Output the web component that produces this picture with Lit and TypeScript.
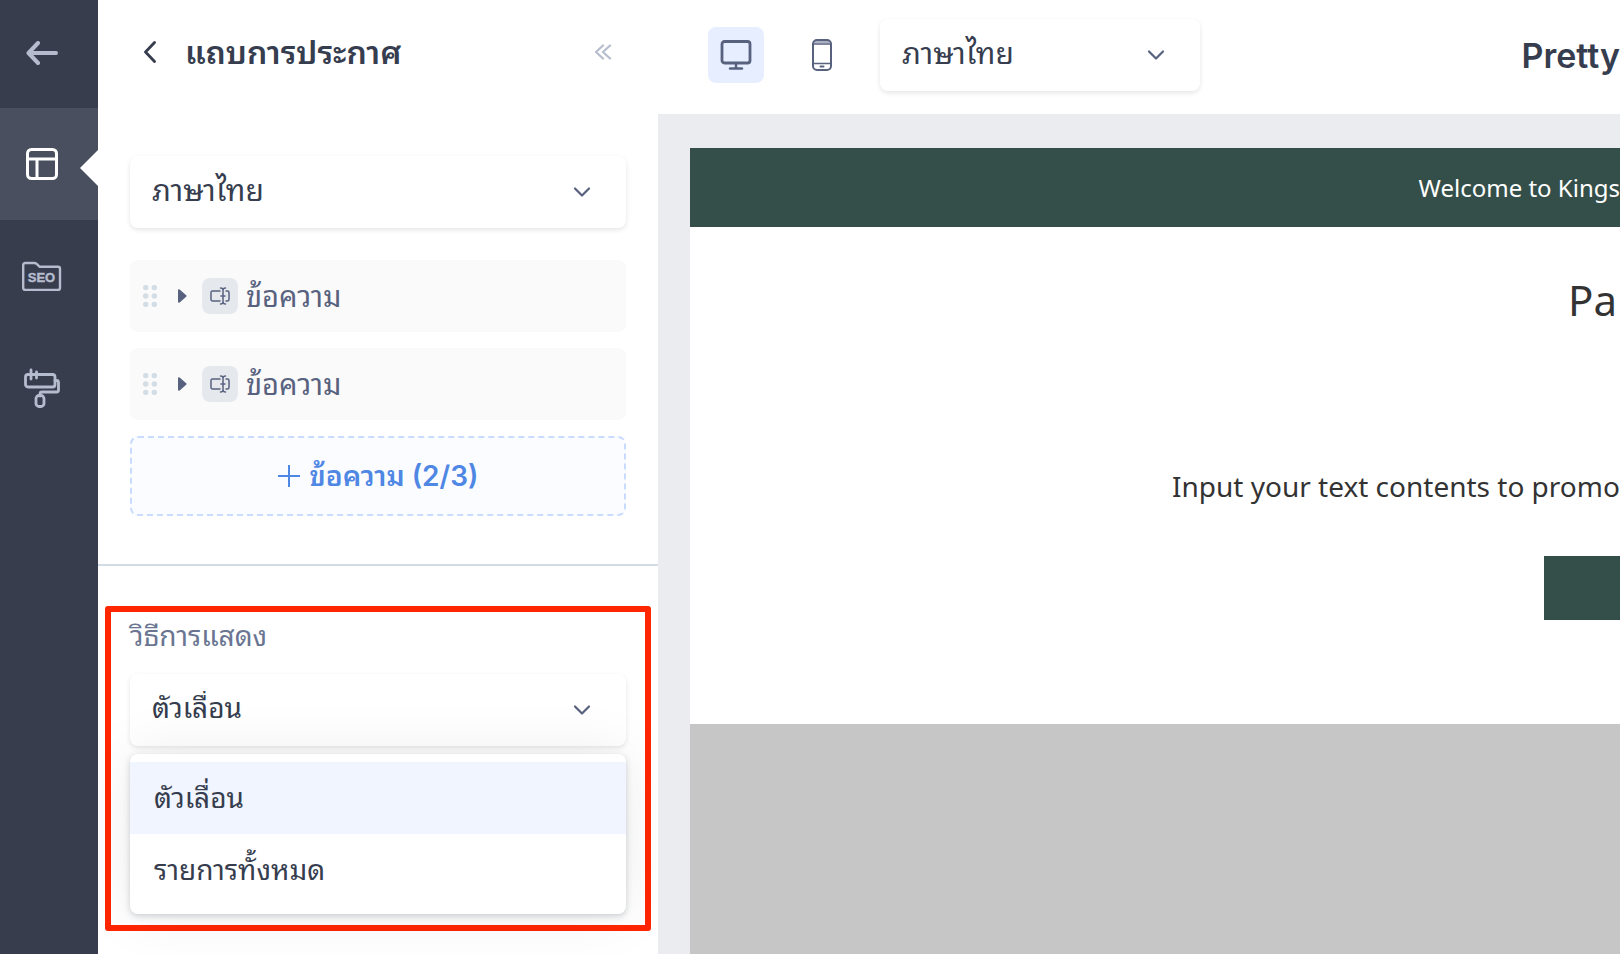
import { LitElement, html, css, svg } from "lit";
import { customElement, property, state } from "lit/decorators.js";

const chevron = html`<svg class="chevron" viewBox="0 0 18 12" width="18" height="12" aria-hidden="true">
  <path d="M2 2.500l7 7 7-7" fill="none" stroke="#58627f" stroke-width="2.200" stroke-linecap="round" stroke-linejoin="round" />
</svg>`;

const sharedSelect = css`
  * { box-sizing: border-box; }
  .field { display: grid; align-items: center; }
  .field > * { grid-area: 1 / 1; }
  .field select {
    appearance: none;
    width: 100%;
    height: 72px;
    margin: 0;
    padding: 0 60px 4px 22px;
    border: 0;
    border-radius: 8px;
    background: #fff;
    box-shadow: 0 2px 5px rgba(0, 0, 0, 0.1);
    color: #363d4e;
    font: inherit;
    font-size: 28px;
    outline: none;
  }
  .field .language { font-size: 30px; }
  .chevron { justify-self: end; margin-right: 35px; pointer-events: none; }
`;

@customElement("nav-rail")
class NavRail extends LitElement {
  static styles = css`
    :host { display: block; background: #373d4d; }
    nav { display: flex; flex-direction: column; }
    button {
      display: flex; align-items: center; justify-content: center;
      position: relative; height: 112px; width: 100%; margin: 0; padding: 0 14px 0 0; border: 0;
      background: none; color: #b5bccd;
    }
    .back { height: 108px; padding-bottom: 2px; }
    .active { background: #494f5f; color: #fff; }
    .active::after {
      content: ""; position: absolute; right: 0; top: 42px;
      border: 18px solid transparent; border-right-color: #fff; border-left: 0;
    }
    .label { font: 700 13px "Liberation Sans", Arial, sans-serif; }
  `;
  render() {
    return html`<nav aria-label="Main">
      <button class="back" aria-label="Back">
        <svg width="32" height="24" viewBox="0 0 32 24" fill="none" stroke="currentColor" stroke-width="4" stroke-linecap="round" stroke-linejoin="round"><path d="M12 2L2.500 12 12 22M3 12h27" /></svg>
      </button>
      <button class="active" aria-label="Layout">
        <svg width="32" height="32" viewBox="0 0 32 32" fill="none" stroke="currentColor" stroke-width="3"><rect x="1.500" y="1.500" width="29" height="29" rx="4" /><path d="M2 11h28M11 11v19" /></svg>
      </button>
      <button aria-label="SEO">
        <svg width="40" height="30" viewBox="0 0 40 30" fill="none" stroke="currentColor" stroke-width="2.400"><path d="M1.200 4a2 2 0 012-2h9q1.500 0 2.500 1l3 2.800h18.300a2 2 0 012 2v19.200a2 2 0 01-2 2h-32.800a2 2 0 01-2-2z" /><text class="label" x="19.500" y="21" text-anchor="middle" fill="currentColor" stroke="currentColor" stroke-width="0.400">SEO</text></svg>
      </button>
      <button aria-label="Theme">
        <svg width="36" height="40" viewBox="0 0 36 40" fill="none" stroke="currentColor" stroke-width="2.800" stroke-linecap="round" stroke-linejoin="round"><rect x="1.500" y="6.500" width="29.500" height="12.500" rx="2.500" /><path d="M7 2v9M12.500 4v6M31 12.500h1.500a2 2 0 012 2v7.500a2 2 0 01-2 2H18a2 2 0 00-2 2v2" /><rect x="12" y="27.500" width="8" height="11" rx="3" /></svg>
      </button>
    </nav>`;
  }
}

@customElement("block-row")
class BlockRow extends LitElement {
  @property() label = "";
  static styles = css`
    :host { display: block; }
    .row { display: flex; align-items: center; height: 72px; padding-left: 13px; border-radius: 8px; background: #fafafa; color: #58627f; font-size: 29px; }
    button { display: flex; margin: 0; padding: 0; border: 0; background: none; color: inherit; }
    .caret { margin: 0 15px 0 20px; }
    .tile { display: flex; align-items: center; justify-content: center; width: 36px; height: 36px; margin-right: 8px; border-radius: 8px; background: #e5e9ee; }
    .text { padding-bottom: 5px; }
  `;
  render() {
    return html`<div class="row">
      <button aria-label="Move">
        <svg width="14" height="22" viewBox="0 0 14 22" fill="#d3dde6">
          ${[2.6, 11, 19.4].map((y) => svg`<circle cx="2.700" cy=${y} r="2.700" /><circle cx="11.300" cy=${y} r="2.700" />`)}
        </svg>
      </button>
      <button class="caret" aria-label="Expand">
        <svg width="10" height="14" viewBox="0 0 10 14"><path d="M2 1.200v11.600L8.500 7z" fill="#58627f" stroke="#58627f" stroke-width="2" stroke-linejoin="round" /></svg>
      </button>
      <span class="tile">
        <svg width="20" height="18" viewBox="0 0 20 18" fill="none" stroke="#58627f" stroke-width="1.500" stroke-linecap="round" stroke-linejoin="round"><path d="M10 4H2.500A1.500 1.500 0 001 5.500v7A1.500 1.500 0 002.500 14H10M16 4h1.500A1.500 1.500 0 0119 5.500v7a1.500 1.500 0 01-1.500 1.500H16M10.500 1q2.500 0 2.500 2 0-2 2.500-2M10.500 17q2.500 0 2.500-2 0 2 2.500 2M13 3v12M11 9h4" /></svg>
      </span>
      <span class="text">${this.label}</span>
    </div>`;
  }
}

@customElement("settings-panel")
class SettingsPanel extends LitElement {
  @state() private modes = ["ตัวเลื่อน", "รายการทั้งหมด"];
  @state() private mode = 0;
  static styles = [sharedSelect, css`
    :host { display: block; overflow: hidden; background: #fff; }
    header { display: flex; align-items: center; height: 104px; padding: 0 46px 0 46px; }
    header button { display: flex; margin: 0; padding: 0; border: 0; background: none; }
    h1 { flex: 1; margin: 0 0 0 29px; padding-bottom: 5px; font-size: 32px; font-weight: 600; color: #363d4e; }
    .content { display: flex; flex-direction: column; gap: 16px; padding: 52px 32px 48px; }
    .content .field { margin-bottom: 16px; }
    .add {
      display: flex; align-items: center; justify-content: center; gap: 10px; height: 80px; padding: 0;
      border: 2px dashed #c9dcff; border-radius: 8px; background: #fbfcff; color: #4f87e4;
      font: inherit; font-size: 28px; font-weight: 600;
    }
    .add span { padding-bottom: 5px; }
    .display { margin: 0 7px; border: 6px solid #ff2600; border-radius: 3px; padding: 0 19px 11px 19px; }
    .rule { height: 2px; margin: 0 0 40px; border: 0; background: #d3dce5; }
    .caption { display: block; height: 62px; line-height: 48px; font-size: 28px; color: #6a7592; }
    .menu {
      margin: 8px 0 0; padding: 8px 0; list-style: none; position: relative; border-radius: 8px; background: #fff;
      box-shadow: 0 2px 6px rgba(40, 48, 70, 0.22), 0 0 60px rgba(0, 0, 0, 0.08);
    }
    .menu li { height: 72px; padding-left: 24px; line-height: 72px; font-size: 28px; color: #363d4e; }
    .menu .chosen { background: #f1f5ff; }
  `];
  render() {
    return html`
      <header>
        <button aria-label="Back"><svg width="12" height="22" viewBox="0 0 12 22" fill="none" stroke="#363d4e" stroke-width="2.800" stroke-linecap="round" stroke-linejoin="round"><path d="M10.500 1.500L1.500 11l9 9.500" /></svg></button>
        <h1>แถบการประกาศ</h1>
        <button aria-label="Collapse"><svg width="18" height="16" viewBox="0 0 18 16" fill="none" stroke="#b5bccd" stroke-width="2.200" stroke-linecap="round" stroke-linejoin="round"><path d="M9 1.500L2 8l7 6.500M16 1.500L9 8l7 6.500" /></svg></button>
      </header>
      <div class="content">
        <div class="field"><select class="language" aria-label="ภาษา"><option>ภาษาไทย</option></select>${chevron}</div>
        <block-row label="ข้อความ"></block-row>
        <block-row label="ข้อความ"></block-row>
        <button class="add">
          <svg width="22" height="22" viewBox="0 0 22 22" stroke="#4f87e4" stroke-width="2"><path d="M0 11h22M11 0v22" /></svg>
          <span>ข้อความ (2/3)</span>
        </button>
      </div>
      <hr class="rule" />
      <section class="display">
        <label class="caption" for="mode">วิธีการแสดง</label>
        <div class="field">
          <select id="mode" @change=${(e: Event) => (this.mode = (e.target as HTMLSelectElement).selectedIndex)}>
            ${this.modes.map((m, i) => html`<option .selected=${i === this.mode}>${m}</option>`)}
          </select>${chevron}
        </div>
        <ul class="menu" role="listbox">
          ${this.modes.map((m, i) => html`<li role="option" aria-selected=${i === this.mode} class=${i === this.mode ? "chosen" : ""} @click=${() => (this.mode = i)}>${m}</li>`)}
        </ul>
      </section>`;
  }
}

@customElement("store-preview")
class StorePreview extends LitElement {
  static styles = [sharedSelect, css`
    :host { display: flex; flex-direction: column; min-width: 0; overflow: hidden; background: #ebecf0; }
    header { display: flex; align-items: center; height: 114px; padding: 0 0 4px 50px; background: #fff; }
    .device { display: flex; align-items: center; justify-content: center; width: 56px; height: 56px; margin: 0; padding: 0; border: 0; border-radius: 8px; background: none; }
    .on { background: #e6eeff; }
    .phone { margin: 0 30px 0 30px; }
    header .field { flex: 0 1 320px; }
    h2 { margin: 0 0 0 auto; font: 600 34px Inter, sans-serif; color: #363d4e; }
    .page { flex: 1; display: flex; flex-direction: column; margin: 34px 0 0 32px; background: #c6c6c6; white-space: nowrap; font-family: "Noto Sans", sans-serif; color: #333; }
    .announce { height: 79px; line-height: 80px; font-size: 24px; text-align: right; background: #344f49; color: #fff; }
    .hero { display: flex; flex-direction: column; align-items: flex-end; height: 497px; background: #fff; }
    .hero h3 { margin: 45px 3px 0 0; font-size: 42px; line-height: 56px; font-weight: 400; }
    .hero p { margin: 138px -10px 0 0; font-size: 28px; line-height: 40px; }
    .cta { width: 76px; height: 64px; margin: 50px 0 0; padding: 0; border: 0; background: #344f49; }
  `];
  render() {
    return html`
      <header>
        <button class="device on" aria-label="Desktop"><svg width="32" height="30" viewBox="0 0 32 30" fill="none" stroke="#58627f" stroke-width="2.800" stroke-linecap="round"><rect x="2" y="1.500" width="28" height="21.500" rx="2.500" /><path d="M16 23v5M10 28.500h12" stroke-width="2.500" /></svg></button>
        <button class="device phone" aria-label="Mobile"><svg width="20" height="32" viewBox="0 0 20 32" fill="none" stroke="#58627f" stroke-width="2" stroke-linecap="round"><path d="M2 4q1-3 4-3h8q3 0 4 3z" fill="#abb1c0" stroke="none" /><rect x="1" y="1" width="18" height="30" rx="4" /><path d="M1 5h18M1 24.500h18" stroke-width="1.500" /><path d="M8.500 27.500h3" /></svg></button>
        <div class="field"><select class="language" aria-label="ภาษา"><option>ภาษาไทย</option></select>${chevron}</div>
        <h2>Pretty</h2>
      </header>
      <main class="page">
        <div class="announce">Welcome to Kings</div>
        <section class="hero">
          <h3>Pa</h3>
          <p>Input your text contents to promot</p>
          <button class="cta" aria-label="Open"></button>
        </section>
      </main>`;
  }
}

@customElement("app-root")
class AppRoot extends LitElement {
  static styles = css`
    :host {
      display: grid; grid-template-columns: 98px 560px minmax(0, 1fr); min-height: 100vh; overflow: hidden;
      font-family: Inter, Thonburi, "Noto Sans Thai Looped", Loma, Garuda, Waree, "Noto Sans Thai", "Noto Sans", sans-serif;
    }
  `;
  render() {
    return html`<nav-rail></nav-rail><settings-panel></settings-panel><store-preview></store-preview>`;
  }
}
